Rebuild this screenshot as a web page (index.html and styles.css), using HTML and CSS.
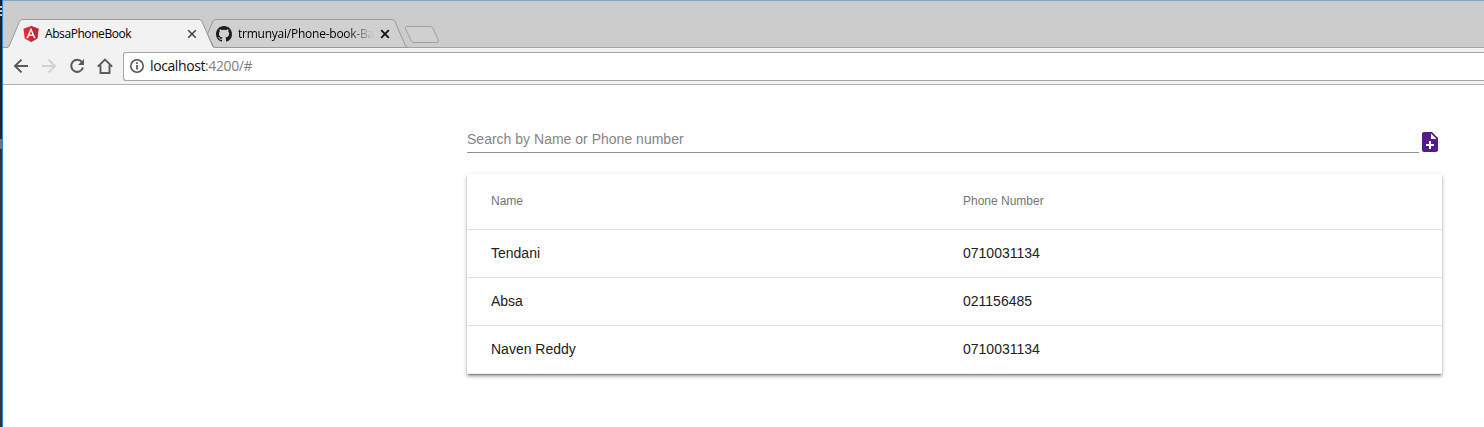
FILE: index.html
```
<!DOCTYPE html>
<html lang="en">
<head>
<meta charset="utf-8">
<title>AbsaPhoneBook</title>
<link rel="stylesheet" href="styles.css">
</head>
<body>
<div class="screen">
  <div class="desktop-edge"><i class="edge-text"></i><i class="edge-scroll"></i></div>
  <div class="window">
    <header class="tab-strip">
      <svg class="tab-shapes" width="460" height="48" viewBox="3 0 460 48" fill="none">
        <path d="M3 47.5H463" stroke="#a2a2a2"/>
        <path d="M207.500 34L213 21Q214 19.500 216 19.500H392Q394 19.500 395 21.500L405.500 46Q406 47.500 408 47.500H214Z" fill="#d0d0d0" stroke="#999"/>
        <path d="M3 48V47.500H7Q8.500 47.500 9.200 46L19.500 21.500Q20.500 19.500 22.500 19.500H199Q201 19.500 202 21.500L212.500 46Q213 47.500 215 47.500V48Z" fill="#f2f2f2"/>
        <path d="M3 47.500H7Q8.500 47.500 9.200 46L19.500 21.500Q20.500 19.500 22.500 19.500H199Q201 19.500 202 21.500L212.500 46Q213 47.500 215 47.500" stroke="#999"/>
        <path d="M406.500 26.500H430Q432 26.500 432.800 28L438.300 40.500Q439 42.500 437 42.500H414Q412 42.500 411 40.500L405.500 28.500Q404.800 26.500 406.500 26.500Z" fill="#d0d0d0" stroke="#a0a0a0"/>
      </svg>
      <div class="tab">
        <svg class="favicon" width="16" height="16" viewBox="0 0 16 16"><path fill="#dd2c35" d="M8 0l7.500 2.700-1.200 9.900L8 16l-6.300-3.400L.5 2.700z"/><path fill="#bd2734" d="M8 0l7.500 2.700-1.200 9.900L8 16z"/><path fill="#fff" fill-rule="evenodd" d="M8 1.800l4.700 10.500H11l-1-2.400H6l-1 2.400H3.300zM8 5L6.600 8.500h2.800z"/></svg>
        <span class="tab-title">AbsaPhoneBook</span>
        <svg class="close" width="10" height="10" viewBox="0 0 10 10"><path d="M1.200 1.200l7.600 7.600M8.800 1.200L1.200 8.800" stroke="#444" stroke-width="1.600"/></svg>
      </div>
      <div class="tab">
        <svg class="favicon" width="16" height="16" viewBox="0 0 16 16"><path fill="#1b1b1b" d="M8 0C3.580 0 0 3.580 0 8c0 3.540 2.290 6.530 5.470 7.590.4.070.55-.17.55-.38 0-.19-.01-.82-.01-1.490-2.010.37-2.530-.49-2.690-.94-.09-.23-.48-.94-.82-1.130-.28-.15-.68-.52-.01-.53.63-.01 1.080.58 1.230.82.72 1.210 1.870.87 2.330.66.07-.52.28-.87.51-1.070-1.780-.2-3.640-.89-3.640-3.950 0-.87.31-1.590.82-2.150-.08-.2-.36-1.020.08-2.120 0 0 .67-.21 2.200.82.640-.18 1.320-.27 2-.27s1.360.09 2 .27c1.530-1.040 2.200-.82 2.200-.82.44 1.100.16 1.920.08 2.120.51.560.82 1.270.82 2.150 0 3.070-1.870 3.750-3.650 3.950.29.25.54.73.54 1.480 0 1.070-.01 1.930-.01 2.200 0 .21.150.46.55.38A8.010 8.010 0 0016 8c0-4.420-3.580-8-8-8z"/></svg>
        <span class="tab-title tab-title-faded">trmunyai/Phone-book-Ba</span>
        <svg class="close" width="10" height="10" viewBox="0 0 10 10"><path d="M1.200 1.200l7.600 7.600M8.800 1.200L1.200 8.800" stroke="#111" stroke-width="1.800"/></svg>
      </div>
    </header>
    <nav class="toolbar">
      <svg class="nav-icon" width="16" height="16" viewBox="0 0 16 16" fill="none" stroke="#5a5a5d" stroke-width="2"><path d="M15 8H3M8.500 1.600L2 8l6.500 6.400"/></svg>
      <svg class="nav-icon" width="16" height="16" viewBox="0 0 16 16" fill="none" stroke="#d2d2d2" stroke-width="2"><path d="M1 8h12M7.500 1.600L14 8l-6.500 6.400"/></svg>
      <svg class="nav-icon" width="16" height="16" viewBox="0 0 16 16" fill="none" stroke="#5a5a5d" stroke-width="2"><path d="M13 4.200A6 6 0 1 0 14 9.500"/><path d="M15 1v6H9z" fill="#5a5a5d" stroke="none"/></svg>
      <svg class="nav-icon" width="16" height="16" viewBox="0 0 16 16" fill="none" stroke="#5a5a5d" stroke-width="1.900"><path d="M.8 8.700L8 1.500l7.200 7.200M3.500 7v8h9V7"/></svg>
      <div class="address">
        <svg width="14" height="14" viewBox="0 0 14 14" fill="none" stroke="#505050"><circle cx="7" cy="7" r="6.200" stroke-width="1.500"/><path d="M7 6v4.500M7 3.300v1.600" stroke-width="1.700"/></svg>
        <span class="url">localhost<span class="url-path">:4200/#</span></span>
      </div>
    </nav>
    <main class="page">
      <div class="search-row">
        <div class="search">Search by Name or Phone number</div>
        <svg width="24" height="24" viewBox="0 0 24 24"><path fill="#551a8b" d="M14 2H6c-1.100 0-1.990.9-1.990 2L4 20c0 1.100.89 2 1.990 2H18c1.100 0 2-.9 2-2V8l-6-6zm2 14h-3v3h-2v-3H8v-2h3v-3h2v3h3v2zm-3-7V3.500L18.500 9H13z"/></svg>
      </div>
      <section class="table">
        <div class="row row-head"><span>Name</span><span>Phone Number</span></div>
        <div class="row"><span>Tendani</span><span>0710031134</span></div>
        <div class="row"><span>Absa</span><span>021156485</span></div>
        <div class="row"><span>Naven Reddy</span><span>0710031134</span></div>
      </section>
    </main>
  </div>
</div>
</body>
</html>
```
FILE: styles.css
```
* { box-sizing: border-box; }
body { margin: 0; overflow: hidden; background: #fff; font-family: "Liberation Sans", Arial, sans-serif; }
svg { display: block; flex: none; }
.screen { display: flex; width: 1484px; height: 427px; }
.desktop-edge { display: flex; flex-direction: column; flex: none; width: 2px; background: linear-gradient(#202226, #242428 130px, #353539 165px, #303238); }
.edge-text { height: 12px; margin-top: 6px; background: repeating-linear-gradient(#c8cbd0 0 2px, #181a20 2px 4px); }
.edge-scroll { height: 10px; margin-top: 121px; background: #707276; }
.window { flex: 1; min-width: 0; border-left: 1px solid #1b8de4; }
.tab-strip { position: relative; display: flex; height: 48px; padding-top: 20px; background: #ccc; border-top: 1px solid #7ca5cc; border-bottom: 1px solid #a2a2a2; }
.tab-shapes { position: absolute; left: 0; top: -1px; }
.tab { position: relative; display: flex; align-items: center; width: 193px; height: 26px; padding-left: 20px; }
.favicon { margin-right: 6px; }
.tab-title { flex: none; width: 136px; white-space: nowrap; font: 12px/18px "Open Sans", sans-serif; letter-spacing: -0.42px; color: #000; }
.tab-title-faded { letter-spacing: -0.24px; -webkit-mask-image: linear-gradient(90deg, #000 108px, transparent 136px); mask-image: linear-gradient(90deg, #000 108px, transparent 136px); }
.close { margin-left: 6px; }
.toolbar { display: flex; align-items: center; height: 37px; padding-left: 10px; background: #f2f2f2; border-bottom: 1px solid #b0b0b0; }
.nav-icon { margin-right: 12px; }
.address { display: flex; align-items: center; flex: 1; height: 29px; margin-left: -2px; padding-left: 6px; border: 1px solid #a6a6a6; border-right: 0; border-radius: 3px 0 0 3px; background: #fff; }
.url { margin-left: 6px; font: 14px/20px "Open Sans", sans-serif; letter-spacing: -0.4px; color: #111; }
.url-path { color: #808080; }
.page { width: 975px; margin: 42px 0 0 464px; }
.search-row { display: flex; height: 47px; padding-top: 3px; }
.search-row svg { margin-left: -1px; }
.search { width: 952px; height: 23px; border-bottom: 1px solid #949494; font-size: 14px; line-height: 19px; letter-spacing: 0.01px; color: #858585; }
.table { background: #fff; box-shadow: 0 3px 1px -2px rgba(0,0,0,.2), 0 2px 2px 0 rgba(0,0,0,.14), 0 1px 5px 0 rgba(0,0,0,.12), 0 3px 4px rgba(0,0,0,.16); }
.row { display: grid; grid-template-columns: 472px 1fr; align-items: center; height: 48px; padding: 0 24px 2px; border-bottom: 1px solid #e0e0e0; font-size: 14px; color: #212121; }
.row:last-child { border-bottom-color: #f0f0f0; }
.row-head { height: 56px; font-size: 12px; color: #757575; }
```
